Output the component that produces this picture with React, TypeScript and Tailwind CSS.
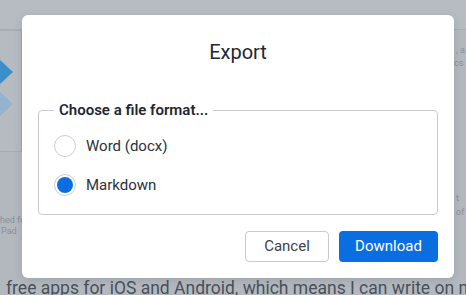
import { useState } from "react";

const font = { fontFamily: "Roboto, 'Noto Sans', sans-serif" };

function Radio({ checked, label, onClick }: { checked: boolean; label: string; onClick: () => void }) {
  return (
    <div className="flex items-center gap-[10px] cursor-pointer" onClick={onClick}>
      <span className="w-[22px] h-[22px] rounded-full border border-[#c9cdd2] bg-white flex items-center justify-center">
        {checked && <span className="w-[16px] h-[16px] rounded-full bg-[#0b6ee0]" />}
      </span>
      <span className="text-[15px] text-[#2b323c]">{label}</span>
    </div>
  );
}

export default function App() {
  const [format, setFormat] = useState("md");

  return (
    <div className="relative w-[466px] h-[295px] overflow-hidden bg-[#b3b8bf]" style={font}>
      {/* page behind the dim overlay */}
      <div className="absolute inset-x-0 top-0 h-[30px] bg-[#b7bcc2] border-b border-[#a9aeb5]" />
      <div className="absolute left-[-60px] top-[30px] w-[82px] h-[122px] rounded-bl-[40px] border border-[#a7acb3] bg-[#b6bbc1]" />
      <svg className="absolute left-0 top-[60px]" width="14" height="60" viewBox="0 0 14 60">
        <polygon points="0,0 13,12 0,24" fill="#3a8fcb" />
        <polygon points="0,32 13,44 0,56" fill="#93b3cf" />
      </svg>
      <div className="absolute left-0 top-[215px] text-[9px] leading-[11px] text-[#8a9099]">
        <div>hed fo</div>
        <div className="pl-[1px]">Pad</div>
      </div>
      <div className="absolute left-[456px] top-[44px] text-[9px] leading-[13px] text-[#8a9099]">
        <div>, a</div>
        <div className="ml-[-2px]">cs</div>
      </div>
      <div className="absolute left-[456px] top-[192px] text-[9px] text-[#8a9099]">t of</div>
      <div className="absolute left-[6px] top-[275px] whitespace-nowrap text-[17.5px] text-[#4a515b]">
        free apps for iOS and Android, which means I can write on m
      </div>

      {/* modal */}
      <div className="absolute left-[22px] top-[15px] w-[432px] h-[263px] rounded-[6px] bg-white shadow-[0_2px_8px_rgba(0,0,0,0.12)] flex flex-col px-[16px]">
        <h1 className="mt-[22px] text-center text-[20px] leading-[30px] text-[#1f2731]">Export</h1>
        <fieldset className="mt-[32px] h-[116px] border border-[#c7cbd0] rounded-[4px] pl-[15px] pt-[13px] flex flex-col gap-[17px]">
          <legend className="px-[5px] text-[15px] font-semibold text-[#1f2731]">Choose a file format...</legend>
          <Radio checked={format === "docx"} label="Word (docx)" onClick={() => setFormat("docx")} />
          <Radio checked={format === "md"} label="Markdown" onClick={() => setFormat("md")} />
        </fieldset>
        <div className="mt-[16px] flex justify-end gap-[10px]">
          <button className="w-[84px] h-[31px] rounded-[4px] border border-[#c7cbd0] bg-white text-[15px] text-[#3b434d]">
            Cancel
          </button>
          <button className="w-[99px] h-[31px] rounded-[4px] bg-[#0b6ee0] text-[15px] text-white">Download</button>
        </div>
      </div>
    </div>
  );
}
